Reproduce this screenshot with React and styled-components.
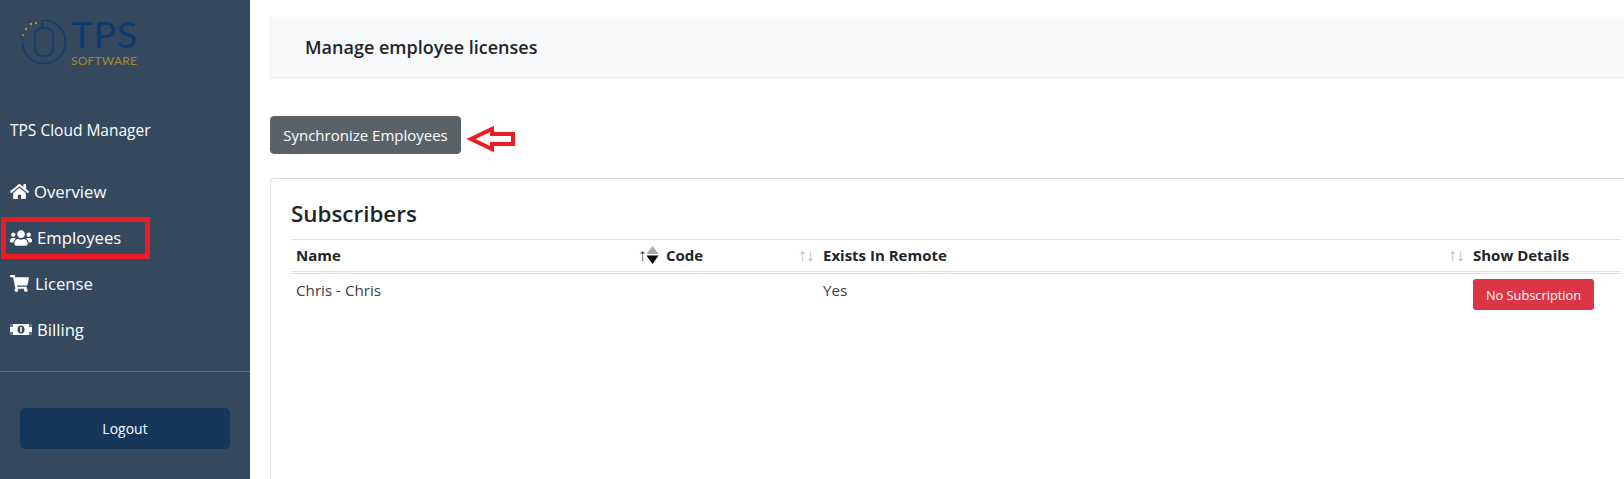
import React from 'react'
import styled, { createGlobalStyle } from 'styled-components'
import { FaHome, FaUsers, FaShoppingCart } from 'react-icons/fa'

const GlobalStyle = createGlobalStyle`
  html, body {
    margin: 0;
    padding: 0;
    background: #fff;
    overflow: hidden;
  }
  *, *::before, *::after { box-sizing: border-box; }
`
const Page = styled.div`
  display: flex;
  width: 1624px;
  height: 479px;
  overflow: hidden;
  font-family: 'Open Sans', 'Noto Sans', sans-serif;
  color: #212529;
`
const Sidebar = styled.aside`
  width: 250px;
  flex: none;
  background: #34495e;
  color: #fff;
  display: flex;
  flex-direction: column;
`
const Logo = styled.div`
  display: flex;
  align-items: flex-start;
  gap: 4px;
  height: 100px;
  padding: 14px 0 0 21px;
  svg { margin-top: 5px; }
`
const LogoWords = styled.div`
  display: flex;
  flex-direction: column;
`
const LogoName = styled.span`
  font-family: 'Lato', sans-serif;
  font-weight: 400;
  font-size: 37px;
  line-height: 40px;
  letter-spacing: 1px;
  color: #0e3a70;
`
const LogoSub = styled.span`
  font-family: 'Lato', sans-serif;
  font-size: 12px;
  line-height: 14px;
  letter-spacing: 0.2px;
  color: #a5872f;
`
const AppName = styled.div`
  padding: 20px 10px 0;
  font-size: 15.5px;
  line-height: 20px;
`
const Nav = styled.nav`
  display: flex;
  flex-direction: column;
  gap: 7px;
  margin-top: 32px;
  padding-left: 10px;
`
const NavItem = styled.a`
  position: relative;
  display: flex;
  align-items: center;
  gap: ${p => p.$gap}px;
  height: 39px;
  font-size: 16.7px;
  color: #fff;

  ${p => p.$marked && `
    &::after {
      content: '';
      position: absolute;
      left: -9px;
      top: -1px;
      width: 149px;
      height: 42px;
      border: 5px solid #ed1c24;
    }
  `}
`
const Divider = styled.div`
  height: 1px;
  margin-top: 22px;
  background: #47748b;
`
const Logout = styled.button`
  display: block;
  width: 210px;
  height: 41px;
  margin: 36px 0 0 20px;
  border: none;
  border-radius: 5px;
  background: #16365a;
  color: #fff;
  font-family: inherit;
  font-size: 14px;
`
const Main = styled.main`
  flex: none;
  width: 1400px;
  padding: 17px 0 0 20px;
`
const Header = styled.header`
  display: flex;
  align-items: center;
  height: 60px;
  padding-left: 35px;
  background: #f8f9fa;
  box-shadow: 0 1px 2px rgba(0, 0, 0, 0.1);
  font-size: 18px;
  font-weight: 600;
  color: #212529;
`
const Actions = styled.div`
  display: flex;
  align-items: center;
  gap: 5px;
  margin-top: 39px;

  svg { margin-top: 7px; }
`
const SyncButton = styled.button`
  width: 191px;
  height: 38px;
  padding: 0;
  border: 1px solid #5a6268;
  border-radius: 4px;
  background: #5a6268;
  color: #fff;
  font-family: inherit;
  font-size: 15px;
`
const Card = styled.section`
  margin-top: 24px;
  height: 320px;
  padding: 20px 0 0 20px;
  border: 1px solid #dfdfdf;
  border-right: none;
  border-radius: 4px 0 0 0;
`
const Title = styled.h4`
  margin: 0;
  height: 40px;
  font-size: 22.4px;
  line-height: 29px;
  font-weight: 600;
  color: #212529;
`
const Table = styled.table`
  width: 1330px;
  table-layout: fixed;
  border-collapse: collapse;
  font-size: 15.2px;
`
const HeadCell = styled.th`
  position: relative;
  width: ${p => p.$width}px;
  height: 33px;
  padding: 0 5px 2px;
  text-align: left;
  font-weight: 700;
  font-size: 15px;
  border-top: 1px solid #dee2e6;
  border-bottom: 3px double #dee2e6;
`
const SortArrows = styled.span`
  position: absolute;
  right: 4px;
  top: 5px;
  font-size: 18px;
  line-height: 18px;
  font-weight: 400;
  letter-spacing: -1px;
  color: #b4bac0;
`
const SortActive = styled.span`
  position: absolute;
  right: 2px;
  top: 6px;
  display: flex;
  align-items: flex-start;
  font-weight: 400;
  font-size: 18px;
  line-height: 16px;
  letter-spacing: -1px;
  color: #444;
`
const Cell = styled.td`
  height: 43px;
  padding: 5px;
  vertical-align: top;
  line-height: 22px;
  color: #3a4046;
`
const DangerButton = styled.button`
  display: block;
  width: 121px;
  height: 31px;
  padding: 0;
  border: none;
  border-radius: 3px;
  background: #dc3545;
  color: #fff;
  font-family: inherit;
  font-size: 12.8px;
`

function LogoMark() {
  return (
    <svg width="46" height="46" viewBox="0 0 46 46" fill="none">
      <path d="M21 1.5 A21.5 21.5 0 1 1 1.5 23" stroke="#0e3a70" strokeWidth="1.4" />
      <rect x="14" y="9" width="18" height="28" rx="7" stroke="#0e3a70" strokeWidth="1.4" />
      <path d="M21 1.5 V9" stroke="#0e3a70" strokeWidth="1.4" />
      <circle cx="15" cy="4" r="1.2" fill="#b8952f" />
      <circle cx="10" cy="5" r="1.2" fill="#b8952f" />
      <circle cx="5" cy="10" r="1.2" fill="#b8952f" />
      <circle cx="2" cy="16" r="1" fill="#b8952f" />
    </svg>
  )
}

function RedArrow() {
  return (
    <svg width="50" height="28" viewBox="0 0 50 28" fill="none">
      <path d="M5 14 L26 4 V9 H47 V19 H26 V24 Z" stroke="#ed1c24" strokeWidth="4" fill="#fff" />
    </svg>
  )
}

function DiamondSort() {
  return (
    <svg width="13" height="18" viewBox="0 0 13 18">
      <path d="M6.5 0 L12.5 8 H0.5 Z" fill="#aaa" />
      <path d="M6.5 18 L12.5 9.5 H0.5 Z" fill="#000" />
    </svg>
  )
}

function BillIcon() {
  return (
    <svg width="22" height="11" viewBox="0 0 22 11">
      <rect width="22" height="11" fill="#fff" />
      <path d="M0 0 H3 V3 H0 Z M19 0 H22 V3 H19 Z M0 8 H3 V11 H0 Z M19 8 H22 V11 H19 Z" fill="#34495e" opacity="0.75" />
      <ellipse cx="11" cy="5.5" rx="3.5" ry="4" fill="#34495e" />
      <path d="M10.2 3 H11.8 V8 H10.2 Z" fill="#fff" />
    </svg>
  )
}

const navItems = [
  { label: 'Overview', icon: <FaHome size={19} />, gap: 5 },
  { label: 'Employees', icon: <FaUsers size={22} />, gap: 5, marked: true },
  { label: 'License', icon: <FaShoppingCart size={19} />, gap: 6 },
  { label: 'Billing', icon: <BillIcon />, gap: 5 },
]

export default function App() {
  return (
    <Page>
      <GlobalStyle />
      <Sidebar>
        <Logo>
          <LogoMark />
          <LogoWords>
            <LogoName>TPS</LogoName>
            <LogoSub>SOFTWARE</LogoSub>
          </LogoWords>
        </Logo>
        <AppName>TPS Cloud Manager</AppName>
        <Nav>
          {navItems.map(({ label, icon, gap, marked }) => (
            <NavItem key={label} $gap={gap} $marked={marked}>
              {icon}
              {label}
            </NavItem>
          ))}
        </Nav>
        <Divider />
        <Logout>Logout</Logout>
      </Sidebar>
      <Main>
        <Header>Manage employee licenses</Header>
        <Actions>
          <SyncButton>Synchronize Employees</SyncButton>
          <RedArrow />
        </Actions>
        <Card>
          <Title>Subscribers</Title>
          <Table>
            <thead>
              <tr>
                <HeadCell $width={370}>
                  Name
                  <SortActive>↑<DiamondSort /></SortActive>
                </HeadCell>
                <HeadCell $width={157}>
                  Code
                  <SortArrows>↑↓</SortArrows>
                </HeadCell>
                <HeadCell $width={650}>
                  Exists In Remote
                  <SortArrows>↑↓</SortArrows>
                </HeadCell>
                <HeadCell $width={153}>Show Details</HeadCell>
              </tr>
            </thead>
            <tbody>
              <tr>
                <Cell>Chris - Chris</Cell>
                <Cell />
                <Cell>Yes</Cell>
                <Cell><DangerButton>No Subscription</DangerButton></Cell>
              </tr>
            </tbody>
          </Table>
        </Card>
      </Main>
    </Page>
  )
}
